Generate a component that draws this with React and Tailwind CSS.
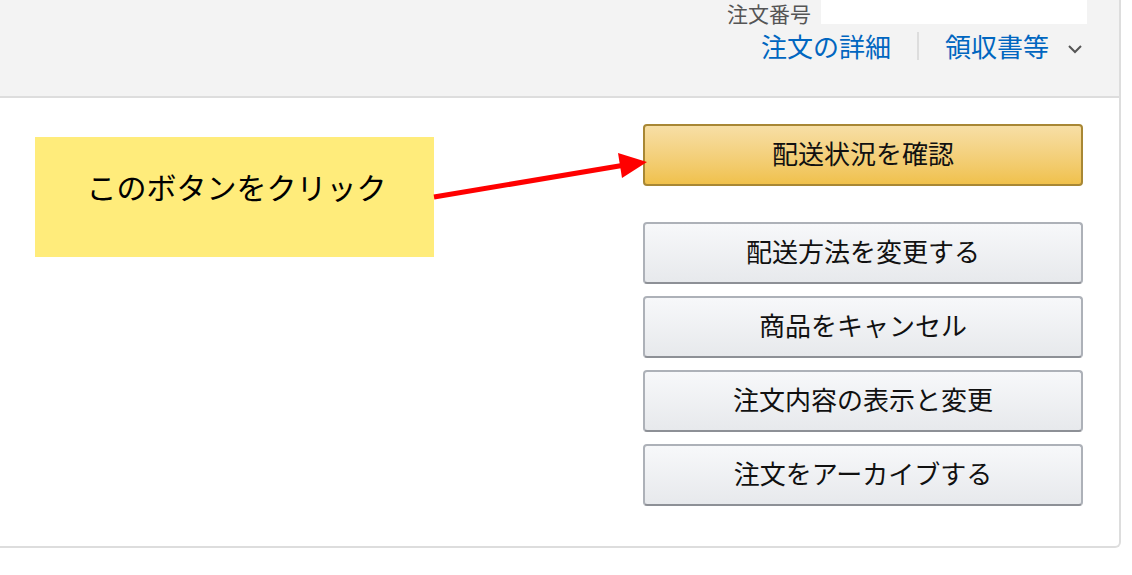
import React from 'react'

const FONT = { fontFamily: '"Noto Sans CJK JP", "Noto Sans", sans-serif' }

const ACTIONS = ['配送方法を変更する', '商品をキャンセル', '注文内容の表示と変更', '注文をアーカイブする']

function Button({ children, primary }) {
  return (
    <button
      className={
        primary
          ? 'h-[62px] w-full rounded-[4px] border-2 border-[#a88734] bg-gradient-to-b from-[#f7dfa5] to-[#f0c14b] pb-[5px] text-[26px] text-[#111]'
          : 'h-[62px] w-full rounded-[4px] border-2 border-[#adb1b8] border-b-[#8d9096] bg-gradient-to-b from-[#f7f8fa] to-[#e7e9ec] pb-[5px] text-[26px] text-[#111]'
      }
    >
      {children}
    </button>
  )
}

export default function App() {
  return (
    <div className="h-[575px] w-[1132px] bg-white" style={FONT}>
      <div className="relative w-[1121px] rounded-br-[6px] border-r-2 border-b-2 border-[#ddd]">
        {/* header */}
        <div className="h-[98px] border-b-2 border-[#ddd] bg-[#f3f3f3] pr-[32px]">
          <div className="flex items-start justify-end">
            <span className="mr-[10px] text-[21px] leading-[26px] text-[#555]">注文番号</span>
            <div className="h-[24px] w-[266px] bg-white" />
          </div>
          <div className="mt-[2px] flex items-center justify-end pr-[4px]">
            <a className="text-[26px] leading-[36px] text-[#0066c0]">注文の詳細</a>
            <span className="mx-[26px] h-[28px] w-[2px] bg-[#ddd]" />
            <a className="text-[26px] leading-[36px] text-[#0066c0]">領収書等</a>
            <svg className="ml-[18px] mt-[6px]" width="16" height="10" viewBox="0 0 16 10">
              <path d="M2 2 L8 8 L14 2" fill="none" stroke="#555" strokeWidth="2" />
            </svg>
          </div>
        </div>

        {/* body */}
        <div className="flex justify-between pt-[26px] pr-[36px] pb-[40px] pl-[35px]">
          <div className="mt-[13px] flex h-[120px] w-[399px] items-start justify-center bg-[#ffec7b] pt-[29px]">
            <span className="ml-[4px] text-[30px] leading-[40px] text-black">このボタンをクリック</span>
          </div>
          <div className="flex w-[440px] flex-col">
            <Button primary>配送状況を確認</Button>
            <div className="mt-[36px] flex flex-col gap-[12px]">
              {ACTIONS.map((a) => (
                <Button key={a}>{a}</Button>
              ))}
            </div>
          </div>
        </div>

        {/* annotation arrow */}
        <svg className="absolute top-[140px] left-[430px]" width="230" height="70" viewBox="0 0 230 70">
          <line x1="4" y1="57" x2="195" y2="25" stroke="#ff0000" strokeWidth="5" />
          <polygon points="217,22 188,13 192,38" fill="#ff0000" />
        </svg>
      </div>
    </div>
  )
}
